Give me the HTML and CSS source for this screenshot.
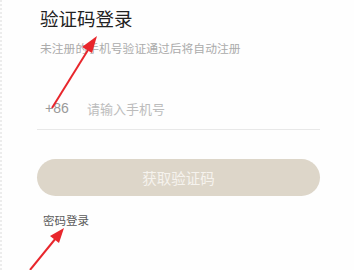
FILE: index.html
```html
<!DOCTYPE html>
<html>
<head>
<meta charset="utf-8">
<link rel="stylesheet" href="styles.css">
</head>
<body>
<div class="page">
  <div class="form">
    <h1 class="title">验证码登录</h1>
    <p class="subtitle">未注册的手机号验证通过后将自动注册</p>
    <div class="phone-row">
      <span class="code">+86</span>
      <span class="placeholder">请输入手机号</span>
    </div>
    <button class="btn">获取验证码</button>
    <div class="alt">密码登录</div>
  </div>
  <svg class="arrows" width="354" height="270" viewBox="0 0 354 270">
    <line x1="52" y1="108" x2="88" y2="50" stroke="#e8262c" stroke-width="2"/>
    <polygon points="97,36 82,47 92,53" fill="#e8262c"/>
    <line x1="30" y1="270" x2="56" y2="238" stroke="#e8262c" stroke-width="2"/>
    <polygon points="64,228 50,236 59,243" fill="#e8262c"/>
  </svg>
</div>
</body>
</html>
```
FILE: styles.css
```css
html, body {
  margin: 0;
  padding: 0;
  background: #fefefe;
}
.page {
  position: relative;
  width: 354px;
  height: 270px;
  overflow: hidden;
  font-family: "Noto Sans CJK SC", "Noto Sans", sans-serif;
  border-left: 2px dotted #ececec;
  box-sizing: border-box;
}
.form {
  padding: 0 34px 0 35px;
  display: flex;
  flex-direction: column;
}
.title {
  margin: 4px 0 0 3px;
  font-size: 18.5px;
  font-weight: 400;
  line-height: 28px;
  color: #222;
}
.subtitle {
  margin: 7px 0 0 3px;
  font-size: 11.8px;
  line-height: 18px;
  color: #ababab;
}
.phone-row {
  margin-top: 31px;
  height: 40px;
  display: flex;
  align-items: center;
  border-bottom: 1px solid #e8e8e8;
  padding-left: 8px;
  padding-bottom: 1px;
  box-sizing: content-box;
}
.code {
  font-family: "Liberation Sans", sans-serif;
  font-size: 14px;
  color: #999;
  width: 42px;
}
.placeholder {
  font-size: 13px;
  color: #bcbcbc;
}
.btn {
  margin-top: 29px;
  height: 37px;
  border: none;
  border-radius: 19px;
  background: #ddd6c9;
  color: #f6f3ee;
  font-family: "Noto Sans CJK SC", sans-serif;
  font-size: 14.5px;
  padding: 0;
}
.alt {
  margin: 15px 0 0 6px;
  font-size: 11.5px;
  line-height: 18px;
  color: #5a5a5a;
}
.arrows {
  position: absolute;
  left: -2px;
  top: 0;
}
```
